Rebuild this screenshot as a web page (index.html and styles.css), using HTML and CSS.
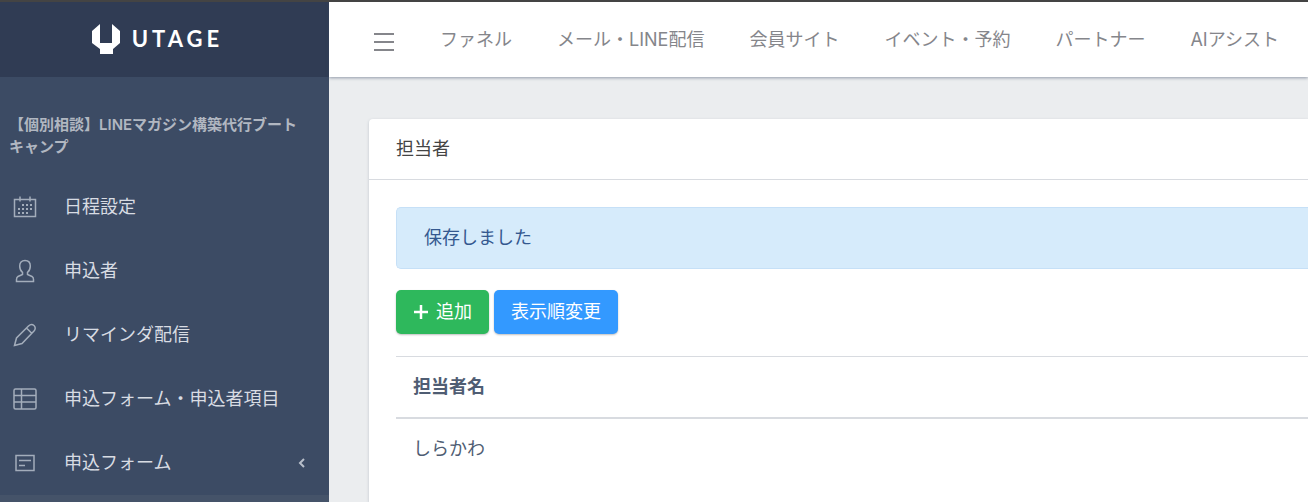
FILE: index.html
```html
<!DOCTYPE html>
<html lang="ja">
<head>
    <meta charset="UTF-8">
    <meta name="viewport" content="width=device-width, initial-scale=1.0">
    <title>担当者 | UTAGE</title>
    <link rel="stylesheet" href="styles.css">
</head>
<body>
    <aside class="sidebar">
        <a href="#" class="brand">
            <svg class="brand-mark" viewBox="0 0 28 30" aria-hidden="true">
                <path fill="#fff" d="M8 0v19h12V0l8 7v12l-7 6v5H8v-5l-8-6V7z"/>
            </svg>
            <span class="brand-name">UTAGE</span>
        </a>
        <h2 class="sidebar-title">【個別相談】LINEマガジン構築代行ブートキャンプ</h2>
        <nav class="menu">
            <a href="#" class="menu-item">
                <svg class="icon" viewBox="0 0 24 24" aria-hidden="true">
                    <path d="M1.500 4.500h21v17h-21zM7 1.500v5M17 1.500v5"/>
                    <path stroke-width="2" stroke-dasharray="2 2" d="M9 10h10M5 14h14M5 18h10"/>
                </svg>
                <span>日程設定</span>
            </a>
            <a href="#" class="menu-item">
                <svg class="icon" viewBox="0 0 24 24" aria-hidden="true">
                    <path d="M12 1.500c-3.500 0-5.300 2.300-5.300 5.500 0 2.800 1 5 2.800 6.300v2.200l-4.500 2c-1.200.6-1.500 1.700-1.500 3v2h17v-2c0-1.300-.3-2.400-1.500-3l-4.500-2v-2.200c1.800-1.300 2.800-3.500 2.800-6.300 0-3.200-1.800-5.500-5.300-5.500z"/>
                </svg>
                <span>申込者</span>
            </a>
            <a href="#" class="menu-item">
                <svg class="icon" viewBox="0 0 24 24" aria-hidden="true">
                    <path d="M1.500 22.500l2-7.500L15.500 3c1.700-1.700 3.800-2 5.500-.5s1.500 3.800 0 5.500L9 20.500zM1.500 22.500L9 20.500M13.500 5l5.500 5.500"/>
                </svg>
                <span>リマインダ配信</span>
            </a>
            <a href="#" class="menu-item">
                <svg class="icon" viewBox="0 0 24 24" aria-hidden="true">
                    <rect x="1" y="2" width="22" height="20" rx="1.500"/>
                    <path d="M8.500 2v20M1 8.500h22M1 15h22"/>
                </svg>
                <span>申込フォーム・申込者項目</span>
            </a>
            <a href="#" class="menu-item">
                <svg class="icon" viewBox="0 0 24 24" aria-hidden="true">
                    <path d="M3 4.500h18v15H3zM6 9.500h12M6 14.500h6"/>
                </svg>
                <span>申込フォーム</span>
                <svg class="chevron" viewBox="0 0 8 10" aria-hidden="true">
                    <path d="M6 1L2 5l4 4"/>
                </svg>
            </a>
        </nav>
        <div class="submenu"></div>
    </aside>

    <div class="page">
        <header class="topbar">
            <button type="button" class="toggle" aria-label="メニュー">
                <svg viewBox="0 0 20 18" aria-hidden="true">
                    <path d="M0 1h20M0 9h20M0 17h20"/>
                </svg>
            </button>
            <nav class="topnav">
                <a href="#">ファネル</a>
                <a href="#">メール・LINE配信</a>
                <a href="#">会員サイト</a>
                <a href="#">イベント・予約</a>
                <a href="#">パートナー</a>
                <a href="#">AIアシスト</a>
            </nav>
        </header>
        <main class="content">
            <section class="card">
                <h1 class="card-header">担当者</h1>
                <div class="card-body">
                    <div class="alert" role="status">保存しました</div>
                    <div class="actions">
                        <button type="button" class="btn btn-success">
                            <svg class="plus" viewBox="0 0 16 16" aria-hidden="true">
                                <path d="M8 1v14M1 8h14"/>
                            </svg>
                            追加
                        </button>
                        <button type="button" class="btn btn-primary">表示順変更</button>
                    </div>
                    <table class="table">
                        <thead>
                            <tr><th scope="col">担当者名</th></tr>
                        </thead>
                        <tbody>
                            <tr><td>しらかわ</td></tr>
                        </tbody>
                    </table>
                </div>
            </section>
        </main>
    </div>
</body>
</html>
```
FILE: styles.css
```css
* {
    box-sizing: border-box;
}
body {
    margin: 0;
    min-height: 100vh;
    display: flex;
    border-top: 2px solid #444;
    background-color: #ebedef;
    color: #4f5d73;
    font-family: Inter, "Noto Sans CJK JP", sans-serif;
    font-size: 18px;
    font-weight: 400;
    line-height: 28px;
}
a {
    text-decoration: none;
}

/* Sidebar */
.sidebar {
    flex: 0 0 329px;
    display: flex;
    flex-direction: column;
    background-color: #3c4b64;
    color: #d8dce3;
}
.brand {
    display: flex;
    align-items: center;
    justify-content: center;
    gap: 12px;
    height: 75px;
    padding: 0 14px 2px 0;
    background-color: #303c54;
    color: #fff;
}
.brand-mark {
    width: 28px;
    height: 30px;
}
.brand-name {
    font-family: Lato, sans-serif;
    font-size: 22px;
    font-weight: 700;
    letter-spacing: 4px;
}
.sidebar-title {
    margin: 0;
    padding: 37px 24px 17px 9px;
    color: #b1b7c1;
    font-size: 15px;
    font-weight: 600;
    line-height: 22px;
}
.menu-item {
    display: flex;
    align-items: center;
    height: 64px;
    padding: 0 23px 0 13px;
    color: #d8dce3;
}
.icon {
    width: 24px;
    height: 24px;
    margin-right: 27px;
    fill: none;
    stroke: #a3adbb;
    stroke-width: 1.5;
}
.chevron {
    width: 8px;
    height: 10px;
    margin-left: auto;
    fill: none;
    stroke: #b8bfca;
    stroke-width: 2;
}
.submenu {
    flex: 1;
    background-color: #455369;
}

/* Top bar */
.page {
    flex: 1;
    min-width: 0;
}
.topbar {
    display: flex;
    align-items: center;
    height: 75px;
    padding-left: 45px;
    background-color: #fff;
    box-shadow: 0 1px 3px rgba(60, 75, 100, 0.5);
}
.toggle {
    display: flex;
    padding: 4px 0 0;
    border: none;
    background: none;
}
.toggle svg {
    width: 20px;
    height: 18px;
    stroke: #85868b;
    stroke-width: 2;
}
.topnav {
    display: flex;
    gap: 45px;
    margin-left: 46px;
    white-space: nowrap;
}
.topnav a {
    color: #85868b;
}

/* Card */
.content {
    padding: 42px 0 0 40px;
}
.card {
    min-height: calc(100vh - 119px);
    background-color: #fff;
    border-radius: 4px 0 0 0;
    box-shadow: 0 1px 3px rgba(60, 75, 100, 0.25);
}
.card-header {
    margin: 0;
    padding: 16px 27px;
    border-bottom: 1px solid #d8dbe0;
    color: #444;
    font-size: 18px;
    font-weight: 400;
}
.card-body {
    padding: 27px 0 0 27px;
}
.alert {
    padding: 16px 27px;
    border: 1px solid #c6e0f7;
    border-right: none;
    border-radius: 5px 0 0 5px;
    background-color: #d6ebfb;
    color: #34588f;
}
.actions {
    display: flex;
    gap: 5px;
    margin: 21px 0 22px;
}
.btn {
    display: flex;
    align-items: center;
    gap: 7px;
    padding: 8px 17px;
    border: none;
    border-radius: 5px;
    color: #fff;
    font: inherit;
    box-shadow: 0 1px 2px rgba(0, 0, 0, 0.25);
}
.btn-success {
    background-color: #2eb85c;
}
.btn-primary {
    background-color: #3399ff;
}
.plus {
    width: 16px;
    height: 16px;
    stroke: #fff;
    stroke-width: 2.5;
}
.table {
    width: 100%;
    border-collapse: collapse;
    text-align: left;
}
.table th,
.table td {
    padding: 16px 17px;
    border-top: 1px solid #d8dbe0;
}
.table th {
    border-bottom: 2px solid #d8dbe0;
    font-weight: 700;
}
```
